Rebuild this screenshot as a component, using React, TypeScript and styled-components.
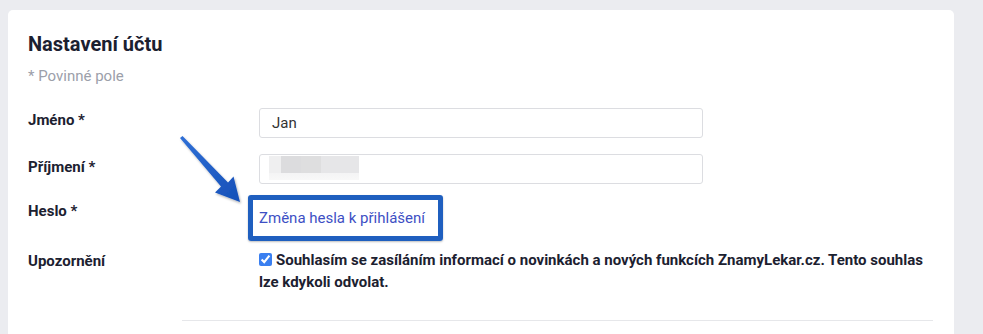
import React from 'react'
import styled, { createGlobalStyle } from 'styled-components'

const GlobalStyle = createGlobalStyle`
  html, body {
    margin: 0;
    padding: 0;
    background: #ebecf0;
    font-family: Roboto, "Liberation Sans", Arial, sans-serif;
    color: #1c2130;
  }
`

const Page = styled.div`
  padding: 10px 29px 0 8px;
  height: 334px;
  box-sizing: border-box;
  overflow: hidden;
`

const Card = styled.section`
  position: relative;
  background: #fff;
  border-radius: 5px;
  padding: 21px 21px 40px 20px;
  min-height: 360px;
  box-sizing: border-box;
`

const Title = styled.h2`
  margin: 0;
  font-size: 20px;
  line-height: 26px;
  font-weight: 700;
  color: #1b2030;
`

const Hint = styled.p`
  margin: 9px 0 0;
  font-size: 15px;
  line-height: 20px;
  color: #9ca0aa;
`

const Form = styled.div`
  margin-top: 22px;
  display: flex;
  flex-direction: column;
`

const Row = styled.div<{ gap: number }>`
  display: flex;
  align-items: flex-start;
  margin-bottom: ${({ gap }) => gap}px;
`

const Label = styled.div<{ offset?: number }>`
  flex: 0 0 231px;
  padding-top: ${({ offset }) => offset ?? 0}px;
  font-size: 15px;
  line-height: 24px;
  font-weight: 700;
  color: #1c2130;
`

const Field = styled.div`
  flex: 1;
  min-width: 0;
`

const Input = styled.div`
  position: relative;
  width: 444px;
  height: 30px;
  box-sizing: border-box;
  border: 1px solid #dcdde1;
  border-radius: 3px;
  padding: 0 12px;
  font-size: 15px;
  line-height: 28px;
  color: #333;
`

const Blur = styled.div`
  display: flex;
  margin-top: 1px;
  margin-left: -3px;
  width: 90px;
  height: 24px;
  background: linear-gradient(#fff0, #fff0 70%, #f4f4f5 70%, #f8f8f8);
`

const BlurPiece = styled.span<{ w: number; c: string }>`
  width: ${({ w }) => w}px;
  height: 17px;
  background: ${({ c }) => c};
`

const Highlight = styled.div`
  display: inline-block;
  margin: -2px 0 0 -11px;
  border: 5px solid #1f5fbf;
  border-radius: 3px;
  padding: 8px 13px 8px 6px;
  box-shadow: 0 1px 2px rgba(0, 0, 0, 0.25);
`

const Link = styled.a`
  font-size: 15px;
  line-height: 20px;
  color: #3d4fc4;
  text-decoration: none;
  white-space: nowrap;
`

const Consent = styled.label`
  display: block;
  max-width: 674px;
  font-size: 15px;
  line-height: 22px;
  font-weight: 700;
  color: #1c2130;
`

const Check = styled.input`
  width: 13px;
  height: 13px;
  margin: 0 4px 0 0;
  vertical-align: -1px;
  accent-color: #3a7ff0;
`

const Divider = styled.hr`
  margin: 27px 0 0 154px;
  border: 0;
  border-top: 1px solid #e6e7ea;
`

// positioned relative to the card (which sits at 8,10 on the page)
const Pointer = styled.svg`
  position: absolute;
  left: 162px;
  top: 114px;
  width: 80px;
  height: 85px;
  overflow: visible;
`

function Arrow() {
  return (
    <Pointer viewBox="0 0 80 85">
      <defs>
        <linearGradient id="ar" x1="0" y1="0" x2="1" y2="1">
          <stop offset="0" stopColor="#2f6fd6" />
          <stop offset="1" stopColor="#1550b8" />
        </linearGradient>
        <filter id="sh" x="-20%" y="-20%" width="140%" height="140%">
          <feDropShadow dx="1" dy="1.5" stdDeviation="0.8" floodColor="#000" floodOpacity="0.3" />
        </filter>
      </defs>
      <path
        d="M10 14 L12.5 12 L58 58.5 L63.5 52.5 L70 78 L45 68.5 L51 62.5 Z"
        fill="url(#ar)"
        filter="url(#sh)"
      />
    </Pointer>
  )
}

export default function App() {
  return (
    <>
      <GlobalStyle />
      <Page>
        <Card>
          <Title>Nastavení účtu</Title>
          <Hint>* Povinné pole</Hint>
          <Form>
            <Row gap={16}>
              <Label offset={0}>Jméno *</Label>
              <Field>
                <Input>Jan</Input>
              </Field>
            </Row>
            <Row gap={13}>
              <Label offset={1}>Příjmení *</Label>
              <Field>
                <Input>
                  <Blur>
                    <BlurPiece w={12} c="#efeff0" />
                    <BlurPiece w={20} c="#dcdcde" />
                    <BlurPiece w={20} c="#dededf" />
                    <BlurPiece w={38} c="#e6e6e8" />
                  </Blur>
                </Input>
              </Field>
            </Row>
            <Row gap={8}>
              <Label offset={2}>Heslo *</Label>
              <Field>
                <Highlight>
                  <Link href="#">Změna hesla k přihlášení</Link>
                </Highlight>
              </Field>
            </Row>
            <Row gap={0}>
              <Label offset={0}>Upozornění</Label>
              <Field>
                <Consent>
                  <Check type="checkbox" defaultChecked />
                  Souhlasím se zasíláním informací o novinkách a nových funkcích ZnamyLekar.cz. Tento souhlas
                  lze kdykoli odvolat.
                </Consent>
              </Field>
            </Row>
          </Form>
          <Divider />
          <Arrow />
        </Card>
      </Page>
    </>
  )
}
